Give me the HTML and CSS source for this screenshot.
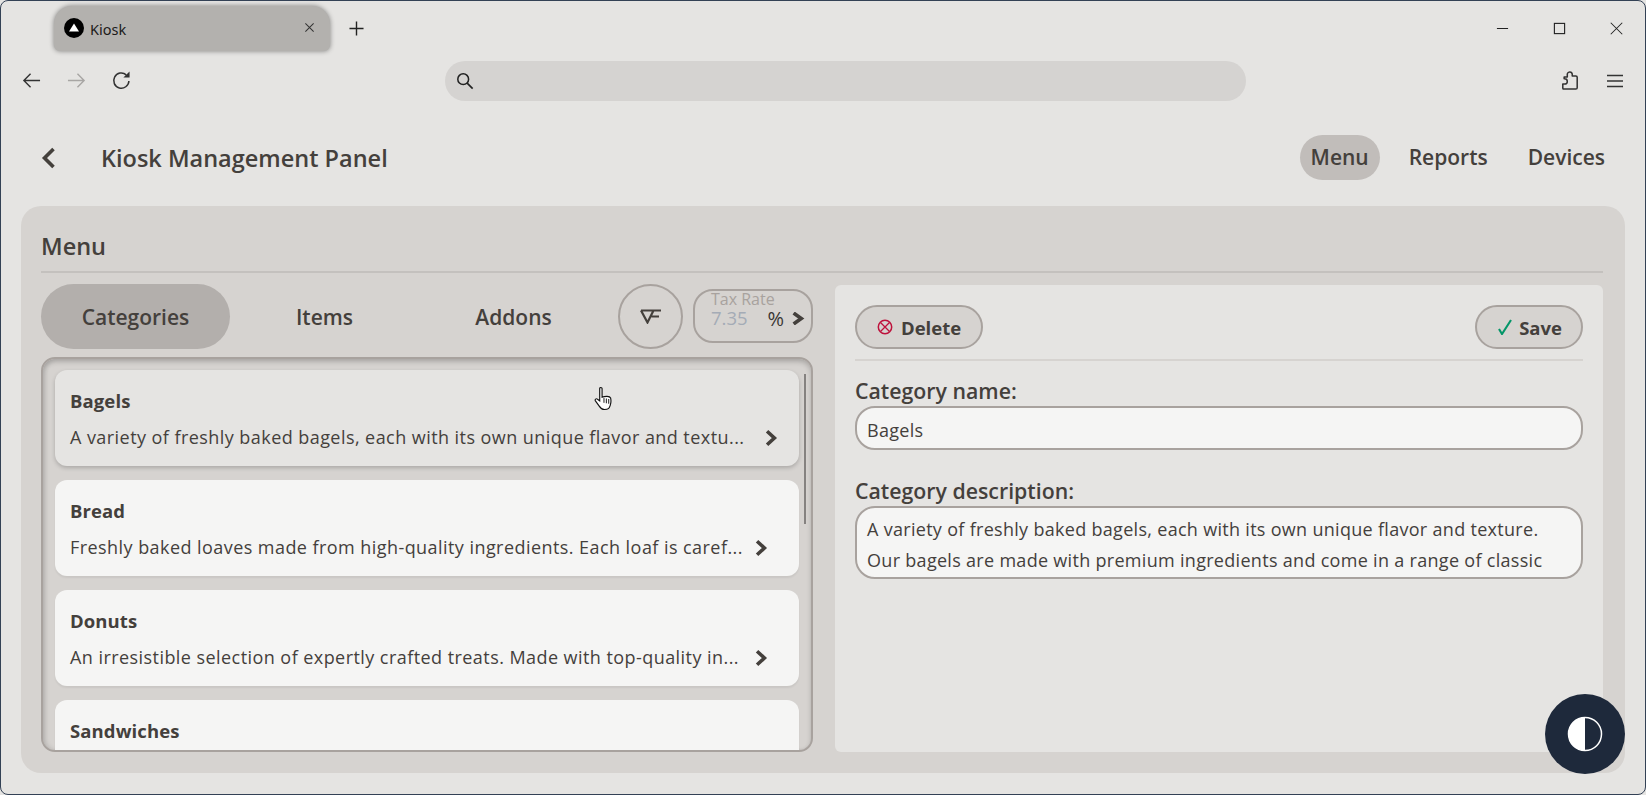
FILE: index.html
```html
<!DOCTYPE html>
<html lang="en">
<head>
    <meta charset="UTF-8">
    <meta name="viewport" content="width=device-width, initial-scale=1.0">
    <title>Kiosk</title>
    <link rel="stylesheet" href="styles.css">
</head>
<body>
<div class="window">
    <div class="tabstrip">
        <div class="tab">
            <svg class="favicon" viewBox="0 0 20 20"><circle cx="10" cy="10" r="10" fill="#000"/><path d="M10 5.500 15 13.500H5Z" fill="#fff"/></svg>
            <span class="tab-title">Kiosk</span>
            <svg class="tab-close" viewBox="0 0 12 12"><path d="M1.500 1.500 10.500 10.500M10.500 1.500 1.500 10.500" stroke="#333" stroke-width="1.100" fill="none"/></svg>
        </div>
        <svg class="new-tab" viewBox="0 0 16 16"><path d="M8 .5V15.500M.5 8H15.500" stroke="#222" stroke-width="1.500" fill="none"/></svg>
        <div class="window-controls">
            <svg viewBox="0 0 14 14"><path d="M1 7H13" stroke="#222" stroke-width="1.200"/></svg>
            <svg viewBox="0 0 14 14"><rect x="1.500" y="1.500" width="11" height="11" stroke="#222" stroke-width="1.200" fill="none"/></svg>
            <svg viewBox="0 0 14 14"><path d="M.8.8 13.200 13.200M13.200.8.8 13.200" stroke="#222" stroke-width="1.100" fill="none"/></svg>
        </div>
    </div>

    <div class="toolbar">
        <div class="nav-icons">
            <svg viewBox="0 0 20 20"><path d="M19 10H2M9 3 2 10l7 7" stroke="#333" stroke-width="1.500" fill="none"/></svg>
            <svg viewBox="0 0 20 20"><path d="M1 10H18M11 3l7 7-7 7" stroke="#a8a6a4" stroke-width="1.500" fill="none"/></svg>
            <svg viewBox="0 0 20 20"><path d="M17.800 10.500A8 8 0 1 1 15 4" stroke="#333" stroke-width="1.600" fill="none"/><path d="M12 6.800H18.500V.5Z" fill="#333"/></svg>
        </div>
        <div class="address">
            <svg viewBox="0 0 20 20"><circle cx="8" cy="8" r="6" stroke="#222" stroke-width="1.700" fill="none"/><path d="M12.400 12.400 18.500 18.500" stroke="#222" stroke-width="1.900"/></svg>
        </div>
        <div class="tool-icons">
            <svg class="puzzle" viewBox="0 0 20 22"><path d="M2.500 20.500H16.500A1.500 1.500 0 0 0 18 19V7.500A1.500 1.500 0 0 0 16.500 6H12.500V4A2.800 2.800 0 0 0 7 3.700V7H3.500V9H4A2.700 2.700 0 0 1 4 15H2V19.500Z" stroke="#333" stroke-width="1.700" fill="none" stroke-linejoin="round"/></svg>
            <svg class="burger" viewBox="0 0 16 14"><path d="M0 1.500H16M0 7H16M0 12.500H16" stroke="#333" stroke-width="1.500"/></svg>
        </div>
    </div>

    <header class="app-header">
        <svg class="back" viewBox="0 0 14 22"><path d="M12 2 3 11l9 9" stroke="#44403c" stroke-width="3.600" fill="none"/></svg>
        <h1>Kiosk Management Panel</h1>
        <nav class="app-nav">
            <a class="nav-link active">Menu</a>
            <a class="nav-link">Reports</a>
            <a class="nav-link">Devices</a>
        </nav>
    </header>

    <main class="panel">
        <h2 class="panel-title">Menu</h2>
        <div class="panel-body">
            <section class="left">
                <div class="controls">
                    <button class="seg active">Categories</button>
                    <button class="seg">Items</button>
                    <button class="seg">Addons</button>
                    <button class="filter">
                        <svg viewBox="0 0 22 15"><path d="M1 1.500H21M1 1.500 7.500 13.500 13.500 1.500M11.500 7.500H19" stroke="#44403c" stroke-width="2.200" fill="none"/></svg>
                    </button>
                    <div class="tax">
                        <span class="tax-label">Tax Rate</span>
                        <div class="tax-row">
                            <span class="tax-value">7.35</span>
                            <span class="tax-unit">%</span>
                            <svg viewBox="0 0 12 12"><path d="M1.500 1 8.500 6 1.500 11" stroke="#44403c" stroke-width="3.400" fill="none"/></svg>
                        </div>
                    </div>
                </div>
                <div class="list">
                    <div class="scrollbar"></div>
                    <article class="card selected">
                        <h3>Bagels</h3>
                        <div class="card-row">
                            <p>A variety of freshly baked bagels, each with its own unique flavor and textu...</p>
                            <svg class="chev" viewBox="0 0 12 16"><path d="M2.500 2 9 8l-6.500 6" stroke="#44403c" stroke-width="3.200" fill="none"/></svg>
                        </div>
                    </article>
                    <article class="card">
                        <h3>Bread</h3>
                        <div class="card-row">
                            <p>Freshly baked loaves made from high-quality ingredients. Each loaf is caref...</p>
                            <svg class="chev" viewBox="0 0 12 16"><path d="M2.500 2 9 8l-6.500 6" stroke="#44403c" stroke-width="3.200" fill="none"/></svg>
                        </div>
                    </article>
                    <article class="card">
                        <h3>Donuts</h3>
                        <div class="card-row">
                            <p>An irresistible selection of expertly crafted treats. Made with top-quality in...</p>
                            <svg class="chev" viewBox="0 0 12 16"><path d="M2.500 2 9 8l-6.500 6" stroke="#44403c" stroke-width="3.200" fill="none"/></svg>
                        </div>
                    </article>
                    <article class="card">
                        <h3>Sandwiches</h3>
                    </article>
                </div>
            </section>

            <section class="detail">
                <div class="detail-actions">
                    <button class="action">
                        <svg viewBox="0 0 16 16"><circle cx="8" cy="8" r="6.700" stroke="#be123c" stroke-width="1.500" fill="none"/><path d="M3.500 3.500 12.500 12.500M12.500 3.500 3.500 12.500" stroke="#be123c" stroke-width="1.300"/></svg>
                        Delete
                    </button>
                    <button class="action save">
                        <svg viewBox="0 0 15 16"><path d="M1.500 10 4.500 15 13.500 1" stroke="#059669" stroke-width="2.100" fill="none"/></svg>
                        Save
                    </button>
                </div>
                <label class="field-label" for="catName">Category name:</label>
                <input class="field" id="catName" type="text" value="Bagels">
                <label class="field-label" for="catDesc">Category description:</label>
                <textarea class="field area" id="catDesc">A variety of freshly baked bagels, each with its own unique flavor and texture. Our bagels are made with premium ingredients and come in a range of classic</textarea>
            </section>
        </div>
    </main>

    <button class="theme">
        <svg viewBox="0 0 36 36"><circle cx="18" cy="18" r="16.500" stroke="#fff" stroke-width="1.500" fill="none"/><path d="M18 1.500A16.500 16.500 0 0 0 18 34.500Z" fill="#fff"/></svg>
    </button>
    <svg class="cursor" viewBox="0 0 20 26"><path d="M6 2c0-1.500 2.500-1.500 2.500 0v9c3-1 8-1.500 9 1 .5 2 .5 5-.5 8-1 3-2 4-6 4-3 0-4-1-5.500-3.500L1.500 15c-1-1.500.8-3 2.200-1.800L6 15Z" fill="#fff" stroke="#111" stroke-width="1.200"/><path d="M10.500 12v5M13 12.500v5M15.500 13v5" stroke="#111" stroke-width="1"/></svg>
</div>
</body>
</html>
```

FILE: styles.css
```css
* {
    box-sizing: border-box;
}
html, body {
    margin: 0;
    height: 100%;
    overflow: hidden;
}
body {
    font-family: "Open Sans", "Noto Sans", sans-serif;
    color: #44403c;
    background: #e5e4e2;
}
button {
    font-family: inherit;
    color: inherit;
    cursor: pointer;
}
.window {
    position: relative;
    height: 795px;
    display: flex;
    flex-direction: column;
    background: #e5e4e2;
    border: 1px solid #334155;
    border-radius: 8px;
    overflow: hidden;
}

/* browser chrome */
.tabstrip {
    height: 55px;
    display: flex;
    align-items: flex-start;
    padding: 5px 22px 0 53px;
}
.tab {
    width: 276px;
    height: 45px;
    display: flex;
    align-items: center;
    padding: 0 15px 0 10px;
    background: #b3b1ae;
    border-radius: 18px 18px 6px 6px;
    box-shadow: 0 0 5px rgba(0, 0, 0, 0.45);
}
.favicon {
    width: 20px;
    height: 20px;
    margin-top: -2px;
}
.tab-title {
    margin-left: 6px;
    flex: 1;
    font-size: 14.500px;
    font-family: "Noto Sans", sans-serif;
    color: #1c1b1a;
}
.tab-close {
    width: 11px;
    height: 11px;
    margin-top: -3px;
}
.new-tab {
    width: 15px;
    height: 15px;
    margin: 15px 0 0 19px;
}
.window-controls {
    margin-left: auto;
    display: flex;
    gap: 44px;
    margin-top: 16px;
}
.window-controls svg {
    width: 13px;
    height: 13px;
}
.toolbar {
    height: 50px;
    display: flex;
    align-items: center;
    padding: 0 22px 1px 21px;
}
.nav-icons {
    width: 423px;
    display: flex;
    gap: 26px;
}
.nav-icons svg {
    width: 19px;
    height: 19px;
}
.address {
    width: 801px;
    height: 40px;
    display: flex;
    align-items: center;
    padding-left: 11px;
    background: #d5d3d1;
    border-radius: 20px;
}
.address svg {
    width: 18px;
    height: 18px;
}
.tool-icons {
    margin-left: auto;
    display: flex;
    align-items: center;
    gap: 28px;
}
.puzzle {
    width: 18px;
    height: 21px;
}
.burger {
    width: 16px;
    height: 14px;
}

/* app header */
.app-header {
    height: 100px;
    display: flex;
    align-items: center;
    padding: 4px 29px 0 40px;
}
.back {
    width: 15px;
    height: 22px;
}
.app-header h1 {
    margin: 0 0 0 45px;
    font-size: 23.500px;
    font-weight: 600;
}
.app-nav {
    margin-left: auto;
    display: flex;
    gap: 18px;
    margin-top: -2px;
}
.nav-link {
    padding: 0 11px;
    height: 45px;
    line-height: 44px;
    font-size: 21px;
    font-weight: 600;
    border-radius: 23px;
}
.nav-link.active {
    background: #c1bdba;
}

/* main panel */
.panel {
    margin: 0 20px;
    height: 567px;
    padding: 20px 22px 21px 20px;
    background: #d6d3d0;
    border-radius: 20px;
    display: flex;
    flex-direction: column;
}
.panel-title {
    margin: 0;
    height: 47px;
    line-height: 41px;
    font-size: 23.500px;
    font-weight: 600;
    border-bottom: 2px solid #c4c1be;
}
.panel-body {
    flex: 1;
    min-height: 0;
    display: flex;
    gap: 22px;
    padding-top: 11px;
}
.left {
    width: 772px;
    display: flex;
    flex-direction: column;
    gap: 8px;
}
.controls {
    display: flex;
    align-items: center;
}
.seg {
    width: 189px;
    height: 65px;
    font-size: 21px;
    font-weight: 600;
    background: none;
    border: 0;
    border-radius: 33px;
}
.seg.active {
    background: #b3afac;
}
.filter {
    width: 65px;
    height: 65px;
    margin-left: 10px;
    padding: 0;
    background: none;
    border: 2px solid #a8a29e;
    border-radius: 50%;
}
.filter svg {
    width: 22px;
    height: 15px;
    display: block;
    margin: 0 auto;
}
.tax {
    width: 120px;
    height: 54px;
    margin: -2px 0 0 10px;
    padding: 0 6px 0 16px;
    border: 2px solid #a8a29e;
    border-radius: 20px;
    line-height: 1;
}
.tax-label {
    display: block;
    font-size: 16px;
    line-height: 16px;
    color: #a8a29e;
}
.tax-row {
    display: flex;
    align-items: center;
    height: 24px;
}
.tax-value {
    font-size: 18.500px;
    color: #a4abb6;
}
.tax-unit {
    margin-left: auto;
    font-size: 20px;
    color: #3a3734;
}
.tax-row svg {
    width: 13px;
    height: 13px;
    margin-left: 8px;
}
.list {
    position: relative;
    flex: 1;
    min-height: 0;
    overflow: hidden;
    padding: 11px 12px 0 12px;
    display: flex;
    flex-direction: column;
    gap: 14px;
    border: 2px solid #a8a29e;
    border-radius: 14px;
    box-shadow: inset 0 3px 5px rgba(0, 0, 0, 0.18), inset 3px 0 4px rgba(0, 0, 0, 0.08);
}
.scrollbar {
    position: absolute;
    right: 5px;
    top: 15px;
    width: 2px;
    height: 150px;
    background: #858280;
}
.card {
    flex: none;
    height: 96px;
    padding: 18px 15px 0 15px;
    background: #f5f5f4;
    border-radius: 12px;
    box-shadow: 0 2px 2px rgba(0, 0, 0, 0.06);
}
.card.selected {
    background: #e5e4e2;
    box-shadow: 0 2px 4px rgba(0, 0, 0, 0.2);
}
.card h3 {
    margin: 0;
    font-size: 18.500px;
    line-height: 25px;
    font-weight: 700;
    letter-spacing: 0.1px;
}
.card-row {
    display: flex;
    align-items: center;
    margin-top: 12px;
}
.card-row p {
    margin: 0;
    width: 675px;
    font-size: 18px;
    letter-spacing: 0.44px;
    line-height: 25px;
    white-space: nowrap;
}
.chev {
    width: 14px;
    height: 18px;
    margin-left: 9px;
}
.selected .chev {
    margin-left: 19px;
}
.detail {
    flex: 1;
    margin-top: 1px;
    padding: 20px 20px 0 20px;
    background: #e5e4e2;
    border-radius: 6px;
}
.detail-actions {
    display: flex;
    justify-content: space-between;
    padding-bottom: 10px;
    border-bottom: 2px solid #d6d3d0;
}
.action {
    height: 44px;
    padding: 0 20px;
    display: flex;
    align-items: center;
    gap: 8px;
    font-size: 18.500px;
    font-weight: 700;
    background: #d6d3d0;
    border: 2px solid #a8a29e;
    border-radius: 22px;
}
.action svg {
    width: 16px;
    height: 16px;
}
.action.save {
    gap: 6px;
    padding: 0 19px 0 20px;
}
.field-label {
    display: block;
    margin: 15px 0 1px 0;
    font-size: 21.300px;
    line-height: 29px;
    font-weight: 600;
}
.field {
    display: block;
    width: 100%;
    height: 44px;
    padding: 3px 10px 0 10px;
    margin-bottom: 26px;
    font-family: inherit;
    font-size: 18px;
    letter-spacing: 0.3px;
    color: #44403c;
    background: #f5f5f4;
    border: 2px solid #a8a29e;
    border-radius: 20px;
    outline: none;
}
.area {
    height: 73px;
    padding: 6px 24px 0 10px;
    line-height: 31px;
    resize: none;
    overflow: hidden;
}
.theme {
    position: absolute;
    right: 20px;
    bottom: 20px;
    width: 80px;
    height: 80px;
    padding: 0;
    background: #1e293b;
    border: 0;
    border-radius: 50%;
}
.theme svg {
    display: block;
    width: 36px;
    height: 36px;
    margin: auto;
}
.cursor {
    position: absolute;
    left: 593px;
    top: 385px;
    width: 19px;
    height: 26px;
}
```
